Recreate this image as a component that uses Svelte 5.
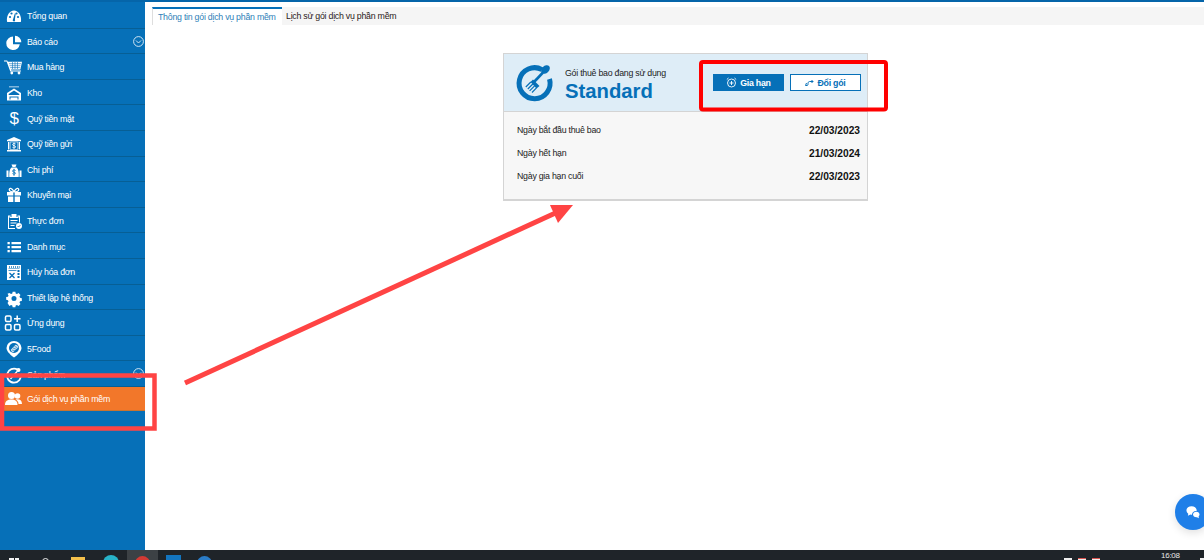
<script>
  const items = [
    { label: 'Tổng quan', icon: '<path d="M1 13.500C.3 7.500 3.500 2.500 8 2.500s7.700 5 7 11a1 1 0 0 1-1 .5H2a1 1 0 0 1-1-.5z"/><g fill="#0670b8"><circle cx="4" cy="9" r="1.100"/><circle cx="5.500" cy="5.500" r="1.100"/><circle cx="10.500" cy="5.500" r="1.100"/><circle cx="12" cy="9" r="1.100"/><path d="M7 11.500 8.800 5.500l.9.300-.8 5.800a1.200 1.200 0 1 1-1.900-.1z"/></g>' },
    { label: 'Báo cáo', chevron: true, icon: '<path d="M7 2.500a6.800 6.800 0 1 0 6.800 7.800H7z"/><path d="M9 1.800v6.500h6.300A6.500 6.500 0 0 0 9 1.800z"/>' },
    { label: 'Mua hàng', icon: '<path d="M-2 1.500h3.200l.6 1.300H16l-1.600 7.700H5l.3 1H15v.9H4.300L.6 2.400H-2z"/><g stroke="#0670b8" stroke-width=".6"><path d="M3 4.700h12M3.500 6.700h11M4.200 8.600h10M6.500 3v7M9 3v7M11.500 3v7"/></g><circle cx="5.800" cy="14" r="1.400"/><circle cx="13" cy="14" r="1.400"/>' },
    { label: 'Kho', icon: '<path d="M1 8 8 3.500 15 8v7.500H1z" fill="#fff"/><path d="M3 1h10v1.500H3z" fill="#7fb6dc"/><path fill="#0670b8" d="M2.700 9 8 5.500 13.300 9v1H2.700z"/><path fill="#0670b8" d="M3.500 11.500h9v3h-1V12.500h-7v2h-1z"/>' },
    { label: 'Quỹ tiền mặt', text: '$' },
    { label: 'Quỹ tiền gửi', icon: '<path d="M8 1 15 4v1.300H1V4z"/><path d="M2 6h1.300v7.500H2zM12.700 6H14v7.500h-1.300z"/><path d="M1 14h14v1.500H1z"/><path d="M4.200 6h7.600v7.500H4.200z" fill="none" stroke="#fff" stroke-width=".6"/><path d="M8 6.500v6.200M9.600 8c-1-.9-3-.6-3 .6 0 1.500 3 .7 3 2.200 0 1.200-2 1.400-3.100.5" fill="none" stroke="#fff" stroke-width=".9"/>' },
    { label: 'Chi phí', icon: '<path d="M5.500 2.500h5L9.500 5h-3z"/><path d="M5.500 5.500h5C12.500 7 13 10 12.700 15H3.300C3 10 3.500 7 5.500 5.500z"/><path d="M.5 8.500h2v6.500h-2zM13.500 8.500h2v6.500h-2z"/><path d="M8 6.800v7M9.500 8.500c-.8-.8-3-.6-3 .6 0 1.400 3 .7 3 2.100 0 1.100-2.100 1.200-3 .4" fill="none" stroke="#0670b8" stroke-width=".9"/>' },
    { label: 'Khuyến mại', icon: '<path d="M2 9.500h5.300V15H2zM8.700 9.500H14V15H8.700zM1 5h6.300v3.500H1zM8.700 5H15v3.500H8.700z"/><path d="M8 4.800C6 .5 3 .8 3.300 2.700 3.500 4.500 6 4.800 8 4.800zm0 0c2-4.300 5-4 4.700-2.100C12.500 4.500 10 4.800 8 4.800z" fill="none" stroke="#fff" stroke-width="1.300"/>' },
    { label: 'Thực đơn', icon: '<path d="M2 2.500h2.500V4h7V2.500H14v7h-1V3.500h-.5V5h-9V3.500H3V15h6v1H2z"/><path d="M5.500 1h5v3h-5z"/><path d="M4.500 7h7v1h-7zM4.500 9.500h6v1h-6zM4.500 12h4v1h-4z"/><circle cx="13" cy="13" r="3"/><path d="m11.600 13 1 1 1.800-1.900" fill="none" stroke="#0670b8" stroke-width=".8"/>' },
    { label: 'Danh mục', icon: '<path d="M1.500 3h2.300v2.300H1.500zM5.500 3H15v2.300H5.500zM1.500 7h2.300v2.300H1.500zM5.500 7H15v2.300H5.500zM1.500 11h2.300v2.300H1.500zM5.500 11H15v2.300H5.500z"/>' },
    { label: 'Hủy hóa đơn', icon: '<path d="M1 1h14v15H1z"/><path fill="#0670b8" d="M2.500 4.500h11V5h-11zM3 2h.7v2H3zM5 2h.7v2H5zM7 2h.7v2H7zM9 2h.7v2H9zM11 2h.7v2H11zM12.800 2h.7v2h-.7z"/><path fill="#0670b8" d="M2.500 6h8v.8h-8zM11.500 6h2v2h-2zM11.500 9h2v2h-2zM11.500 12h2v2h-2z"/><path d="m3.500 9 5 5m0-5-5 5" stroke="#0670b8" stroke-width="1.300"/>' },
    { label: 'Thiết lập hệ thống', icon: '<path fill-rule="evenodd" d="M6.500 1h3l.4 2 1.400.6 1.800-1.100 2.100 2.100-1.100 1.800.6 1.400 2 .4v3l-2 .4-.6 1.400 1.100 1.800-2.100 2.100-1.800-1.100-1.400.6-.4 2h-3l-.4-2-1.400-.6-1.800 1.100L.8 13.600l1.100-1.800-.6-1.400-2-.4v-3l2-.4.6-1.400-1.100-1.800L2.900 2.500l1.800 1.100 1.400-.6zM8 5.700a2.800 2.800 0 1 0 0 5.600 2.800 2.800 0 0 0 0-5.600z" transform="translate(.8 .8) scale(.9)"/>' },
    { label: 'Ứng dụng', icon: '<g fill="none" stroke="#fff" stroke-width="1.500"><rect x="-.5" y="1" width="5.500" height="5.500" rx="1.200"/><rect x="-.5" y="9.500" width="5.500" height="5.500" rx="1.200"/><rect x="8.500" y="9.500" width="5.500" height="5.500" rx="1.200"/><path d="M11.200 .5v6.500M8 3.700h6.500"/></g>' },
    { label: '5Food', icon: '<path fill-rule="evenodd" d="M8 16.500C3 13 .5 9.500.5 7a7.500 7 0 0 1 15 0c0 2.500-2.500 6-7.500 9.500z"/><circle cx="8" cy="7" r="5" fill="#0670b8"/><path d="M4.800 8.800 9.500 3.800c1.500.2 2.500 1 3 2.500L7.200 11.300c-1.200-.3-2-1.200-2.400-2.500z" fill="#cfe4f3"/><path d="m6 9 4 1M7 7l4 1.500M8.500 5.300l3 1.500" stroke="#0670b8" stroke-width=".6"/>' },
    { label: 'Sản phẩm', chevron: true, icon: '<path d="M11.500 2.600A7 7 0 1 0 14.800 7" fill="none" stroke="#fff" stroke-width="1.800"/><path d="m4.500 12 7-8" stroke="#fff" stroke-width="1.300"/><circle cx="12.500" cy="3" r="2"/>' },
    { label: 'Gói dịch vụ phần mềm', active: true, icon: '<circle cx="5.500" cy="4.500" r="3.500"/><path d="M-1 14c0-4 2.500-5.500 6.500-5.500 3.500 0 6 1.500 6 5.500z"/><circle cx="11.500" cy="5" r="2.800"/><path d="M9.500 8.500c3.500-.7 6.500.5 6.500 4.500h-3.500c0-2-1-3.500-3-4.500z"/>' }
  ];
  const details = [
    ['Ngày bắt đầu thuê bao', '22/03/2023'],
    ['Ngày hết hạn', '21/03/2024'],
    ['Ngày gia hạn cuối', '22/03/2023']
  ];
</script>

<div class="screen">
  <div class="topline"></div>
  <div class="workspace">
    <nav class="sidebar">
      {#each items as item}
        <div class="row" class:active={item.active}>
          <span class="ico">
            {#if item.text}
              <span class="glyph">{item.text}</span>
            {:else}
              <svg class="nav-icon" width="16" height="16" viewBox="0 0 16 16" fill="#fff">{@html item.icon}</svg>
            {/if}
          </span>
          <span class="label">{item.label}</span>
          {#if item.chevron}
            <svg class="chev" width="11" height="11" viewBox="0 0 11 11" fill="none" stroke="#e6f1f8" stroke-width=".9"><circle cx="5.500" cy="5.500" r="4.900"/><path d="m3 4.500 2.500 2.500L8 4.500"/></svg>
          {/if}
        </div>
      {/each}
    </nav>

    <main class="content">
      <div class="tabs">
        <div class="tab current">Thông tin gói dịch vụ phần mềm</div>
        <div class="tab">Lịch sử gói dịch vụ phần mềm</div>
      </div>

      <section class="card">
        <header class="card-head">
          <svg class="logo" width="38" height="38" viewBox="0 0 38 38">
            <path d="M26 5.600A15.500 15.500 0 1 0 33.500 15" fill="none" stroke="#0670b8" stroke-width="5"/>
            <ellipse cx="29.500" cy="5.500" rx="5" ry="3.600" fill="#0670b8" transform="rotate(-45 29.500 5.500)"/>
            <path d="m27 8.500-9 9.500" stroke="#0670b8" stroke-width="2.600"/>
            <path d="m17 15.500 6.500 6.500-3 2.500L14.500 18z" fill="#0670b8"/>
            <path d="m14.800 18-5 5M16.800 20l-5 5M18.600 21.800l-5 5M20.500 23.800l-4.500 4.700" stroke="#0670b8" stroke-width="1.200"/>
          </svg>
          <div class="plan">
            <div class="plan-caption">Gói thuê bao đang sử dụng</div>
            <div class="plan-name">Standard</div>
          </div>
          <div class="actions">
            <button class="btn primary">
              <svg width="11" height="11" viewBox="0 0 11 11" fill="none" stroke="#fff" stroke-width=".9"><circle cx="5.500" cy="6" r="4"/><path d="M5.500 4v4M3.500 6h4M.8 2.500 2.500 1M10.200 2.500 8.500 1"/></svg>
              Gia hạn
            </button>
            <button class="btn outline">
              <svg width="9" height="9" viewBox="0 0 9 9" fill="none" stroke="#0670b8" stroke-width="1"><path d="M.5 7.500H2c1 0 1-1 1-2s.5-2 1.500-2H8M6.500 2 8 3.500 6.500 5M1.500 5 .5 7.500"/></svg>
              Đổi gói
            </button>
          </div>
        </header>
        <div class="card-body">
          {#each details as d}
            <div class="detail"><span>{d[0]}</span><b>{d[1]}</b></div>
          {/each}
        </div>
      </section>
    </main>
  </div>

  <footer class="taskbar">
    <span class="task win"><i></i><i></i></span>
    <span class="task search"></span>
    <span class="task folder"></span>
    <span class="task edge"></span>
    <span class="task chrome"><i></i></span>
    <span class="task app1"></span>
    <span class="task app2"></span>
    <span class="spacer"></span>
    <span class="tray"></span>
    <span class="tray flag"></span>
    <span class="tray flag"></span>
    <span class="clock">16:08</span>
    <span class="corner"></span>
  </footer>

  <div class="chat">
    <svg width="16" height="15" viewBox="0 0 22 20" fill="#fff"><path d="M9 1.500c4 0 7 2.400 7 5.500 0 .4 0 .7-.1 1a6 6 0 0 0-6.400 5c-.7 0-1.400 0-2-.2L4 14.500l.5-2.800C3 10.700 2 9 2 7c0-3.100 3-5.500 7-5.500z"/><path d="M15.500 9c2.700 0 4.500 1.700 4.500 3.800 0 1.100-.5 2-1.300 2.700l.3 2.500-2.500-1.500c-3 .4-5.500-1.300-5.500-3.700C11 10.700 13 9 15.500 9z"/></svg>
  </div>

  <svg class="marks" width="1204" height="560" viewBox="0 0 1204 560">
    <path d="M185 383 562 210" stroke="#ff4444" stroke-width="5" fill="none"/>
    <path d="M573 205H550l8 18z" fill="#ff4444"/>
    <path d="M2 375.500H154.500V428.500H2z" stroke="#ff4444" stroke-width="4.500" fill="none"/>
    <rect x="701" y="62" width="185" height="47.500" rx="2" stroke="#f00" stroke-width="4" fill="none"/>
  </svg>
</div>

<style>
  :global(body) { margin: 0; background: #fff; }
  .screen {
    position: relative;
    width: 1204px;
    height: 560px;
    overflow: hidden;
    display: flex;
    flex-direction: column;
    font-family: "Liberation Sans", sans-serif;
    letter-spacing: -.25px;
    color: #1c1c1c;
  }
  .topline { height: 2px; background: #0565a9; flex: none; }
  .workspace { flex: 1; display: flex; min-height: 0; }
  .sidebar {
    width: 145px;
    flex: none;
    background: #0670b8;
    padding-top: 1px;
  }
  .row {
    height: 25.6px;
    box-sizing: border-box;
    display: flex;
    align-items: center;
    position: relative;
    border-bottom: 1px solid #075f95;
    color: #fff;
    font-size: 8.800px;
    padding-top: 2px;
  }
  .row.active { background: #f2772a; border-bottom-color: #c9742f; height: 24px; }
  .ico { width: 27px; display: flex; justify-content: center; flex: none; padding-left: 1px; box-sizing: border-box; }
  .nav-icon { overflow: visible; }
  .glyph { font: 17px/16px "Liberation Sans", sans-serif; color: #fff; }
  .chev { position: absolute; right: 1.500px; top: 7px; }
  .content { flex: 1; min-width: 0; padding: 5px 0 0 7px; }
  .tabs {
    height: 18px;
    display: flex;
    background: #f5f5f5;
    font-size: 8.800px;
    margin-bottom: 28px;
  }
  .tab { padding: 0 4px; line-height: 19px; color: #2b1a1a; white-space: nowrap; }
  .tab.current {
    width: 130px;
    box-sizing: border-box;
    padding: 0 0 0 5px;
    background: #fff;
    color: #2f7fb8;
    border-top: 2px solid #0670b8;
    border-left: 1px solid #dedede;
    line-height: 17px;
  }
  .card {
    width: 365px;
    height: 148px;
    margin-left: 351px;
    box-sizing: border-box;
    border: 1px solid #d4d4d4;
    border-bottom-width: 2px;
    background: #f7f7f7;
    display: flex;
    flex-direction: column;
  }
  .card-head {
    height: 57px;
    flex: none;
    background: #deedf7;
    border-bottom: 1px solid #d4d4d4;
    display: flex;
    align-items: center;
    padding-left: 12px;
  }
  .logo { flex: none; overflow: visible; }
  .plan { margin-left: 11px; width: 148px; }
  .plan-caption { font-size: 8.800px; line-height: 10px; margin-top: 6px; }
  .plan-name { font-size: 20.300px; line-height: 24px; margin-top: 1px; font-weight: 700; letter-spacing: 0; color: #0670b8; }
  .actions { display: flex; gap: 6px; margin-left: 0; }
  .btn {
    width: 71px;
    height: 17px;
    padding: 0;
    box-sizing: border-box;
    font: 700 8.800px "Liberation Sans", sans-serif;
    letter-spacing: -.25px;
    display: flex;
    align-items: center;
    justify-content: center;
    gap: 3px;
    border: 1px solid #0670b8;
  }
  .primary { background: #0670b8; color: #fff; }
  .outline { background: #fff; color: #0670b8; }
  .card-body { padding: 6px 7px 0 13px; font-size: 8.800px; }
  .detail { height: 23px; display: flex; justify-content: space-between; align-items: center; }
  .detail b { font-weight: 700; color: #111; font-size: 10.200px; letter-spacing: 0; margin-top: 1px; }
  .taskbar {
    height: 10px;
    flex: none;
    background: #1f2429;
    display: flex;
    align-items: flex-start;
    position: relative;
  }
  .task { display: block; flex: none; position: relative; }
  .win { width: 10px; height: 10px; margin: 8px 0 0 9px; display: flex; gap: 1px; }
  .win i { display: block; width: 5px; height: 10px; background: #f2f2f2; }
  .search { width: 5px; height: 5px; border: 1px solid #eee; border-radius: 50%; margin: 8px 0 0 23px; }
  .folder { width: 14px; height: 8px; background: #f4c04b; margin: 7px 0 0 22px; }
  .edge { width: 16px; height: 16px; border-radius: 50%; background: #27b3c8; margin: 5px 0 0 18px; }
  .chrome { width: 31px; height: 10px; background: #3c4145; margin-left: 8px; }
  .chrome i { display: block; width: 15px; height: 15px; border-radius: 50%; background: #d33a34; margin: 6px auto 0; }
  .app1 { width: 15px; height: 15px; background: #1375bf; margin: 5px 0 0 8px; }
  .app2 { width: 15px; height: 15px; border-radius: 50%; background: #2a7cc7; margin: 6px 0 0 16px; }
  .spacer { flex: 1; }
  .tray { width: 8px; height: 6px; background: #eee; margin: 8px 6px 0 0; }
  .tray.flag { border-top: 1px solid #d9534f; box-sizing: border-box; }
  .clock { font: 8px/10px "Liberation Sans", sans-serif; color: #e8e8e8; margin: 1px 0 0 55px; width: 39px; }
  .corner { width: 4px; height: 4px; background: #eee; margin-top: 8px; }
  .chat {
    position: absolute;
    left: 1175px;
    top: 494px;
    width: 36px;
    height: 36px;
    border-radius: 50%;
    background: #1f7fe8;
    box-shadow: 0 3px 8px rgba(0, 0, 0, .12);
    display: flex;
    align-items: center;
    justify-content: center;
  }
  .marks { position: absolute; left: 0; top: 0; pointer-events: none; }
</style>
